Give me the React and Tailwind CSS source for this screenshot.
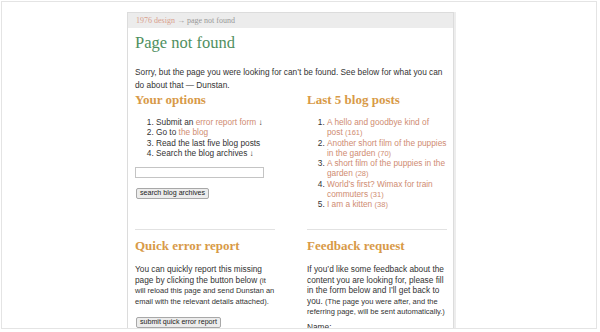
export default function App() {
    const posts = [
        { title: 'A hello and goodbye kind of post', count: 161 },
        { title: 'Another short film of the puppies in the garden', count: 70 },
        { title: 'A short film of the puppies in the garden', count: 28 },
        { title: 'World’s first? Wimax for train commuters', count: 31 },
        { title: 'I am a kitten', count: 38 },
    ];

    const heading = "font-['Liberation_Serif',serif] text-[13px] font-bold leading-[16px] text-[#d89a48]";
    const button =
        'rounded-[2px] border border-[#a8a8a8] bg-[#ececec] px-[3px] text-[7.1px] leading-[9px] text-[#222]';

    return (
        <div className="h-[332px] w-[600px] bg-white p-px">
            {/* outer frame */}
            <div className="h-[328px] w-[596px] overflow-hidden border border-[#e4e4e4] bg-white">
                <div className="ml-[125px] mt-[10px] w-[327px] border border-[#dcdcdc] bg-white shadow-[2px_0_0_#ededed] font-['Liberation_Sans',Arial,sans-serif] text-[#333]">
                    {/* breadcrumb */}
                    <div className="h-[15px] bg-[#ececec] px-[8px] font-['Liberation_Serif',serif] text-[8px] leading-[15px] text-[#999]">
                        <span className="text-[#d9a08c]">1976 design</span> → page not found
                    </div>

                    <div className="px-[7px]">
                        <h1 className="mt-[5px] font-['Liberation_Serif',serif] text-[16.5px] leading-[20px] text-[#4f8f60]">Page not found</h1>
                        <p className="mt-[13px] text-[8.3px] leading-[13px]">
                            Sorry, but the page you were looking for can’t be found. See below for what you can do about that — Dunstan.
                        </p>

                        <div className="grid grid-cols-[140px_140px] gap-x-[32px]">
                            {/* options */}
                            <div>
                                <h2 className={heading}>Your options</h2>
                                <ol className="mt-[9px] list-decimal pl-[21px] text-[8.3px] leading-[10.3px]">
                                    <li>Submit an <span className="text-[#cf8c72]">error report form</span> ↓</li>
                                    <li>Go to <span className="text-[#cf8c72]">the blog</span></li>
                                    <li>Read the last five blog posts</li>
                                    <li>Search the blog archives ↓</li>
                                </ol>
                                <div className="mt-[9px] h-[11px] w-[129px] border border-[#c4c4c4] bg-white" />
                                <button className={`mt-[3px] ml-px h-[11px] ${button}`}>search blog archives</button>
                            </div>

                            {/* last posts */}
                            <div>
                                <h2 className={heading}>Last 5 blog posts</h2>
                                <ol className="mt-[9px] list-decimal pl-[20px] text-[8.3px] leading-[10.3px] marker:text-[#333]">
                                    {posts.map((p) => {
                                        // keep the last word together with its count
                                        const cut = p.title.lastIndexOf(' ');
                                        return (
                                            <li key={p.count} className="text-[#cf8c72]">
                                                {p.title.slice(0, cut + 1)}
                                                <span className="whitespace-nowrap">
                                                    {p.title.slice(cut + 1)} <span className="text-[7.5px] leading-none">({p.count})</span>
                                                </span>
                                            </li>
                                        );
                                    })}
                                </ol>
                            </div>

                            {/* rules */}
                            <div className="col-span-2 mt-[19px] grid grid-cols-[140px_140px] gap-x-[32px]">
                                <div className="border-t border-[#e2e2e2]" />
                                <div className="border-t border-[#e2e2e2]" />
                            </div>

                            {/* quick error */}
                            <div className="mt-[8px]">
                                <h2 className={heading}>Quick error report</h2>
                                <p className="mt-[10.5px] text-[8.3px] leading-[10.5px]">
                                    You can quickly report this missing page by clicking the button below{' '}
                                    <span className="text-[7.5px] leading-none">(it will reload this page and send Dunstan an email with the relevant details attached).</span>
                                </p>
                                <button className={`mt-[10.5px] ml-px h-[11px] ${button}`}>submit quick error report</button>
                            </div>

                            {/* feedback */}
                            <div className="mt-[8px]">
                                <h2 className={heading}>Feedback request</h2>
                                <p className="mt-[10.5px] text-[8.3px] leading-[10.5px]">
                                    If you’d like some feedback about the content you are looking for, please fill in the form below and I’ll get back to you.{' '}
                                    <span className="text-[7.5px] leading-none">(The page you were after, and the referring page, will be sent automatically.)</span>
                                </p>
                                <p className="mt-[5.5px] text-[8.3px] leading-[10.5px]">Name:</p>
                            </div>
                        </div>
                    </div>
                </div>
            </div>
        </div>
    );
}
